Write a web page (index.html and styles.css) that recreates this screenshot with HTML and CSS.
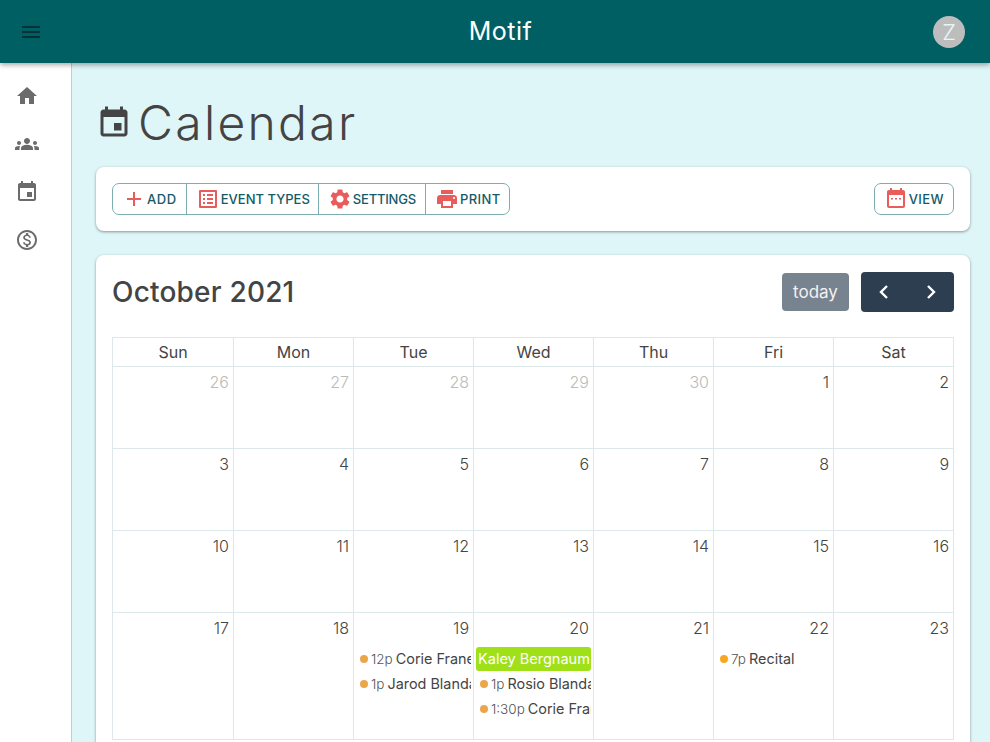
FILE: index.html
```html
<!DOCTYPE html>
<html>
<head>
  <meta charset="utf-8">
  <title>Motif - Calendar</title>
  <link rel="stylesheet" href="styles.css">
</head>
<body>
<div class="topbar">
  <button class="menu_btn">
    <svg viewBox="0 0 24 24" width="24" height="24"><path d="M3 18h18v-2H3v2zm0-5h18v-2H3v2zm0-7v2h18V6H3z"/></svg>
  </button>
  <div class="brand">Motif</div>
  <div class="avatar">Z</div>
</div>

<div class="layout">
  <div class="sidebar">
    <svg viewBox="0 0 24 24" width="24" height="24"><path d="M10 20v-6h4v6h5v-8h3L12 3 2 12h3v8z"/></svg>
    <svg viewBox="0 0 24 24" width="24" height="24"><path d="M12 12.75c1.63 0 3.07.39 4.24.9 1.08.48 1.76 1.56 1.76 2.73V18H6v-1.61c0-1.18.68-2.26 1.76-2.73 1.17-.52 2.61-.91 4.24-.91zM4 13c1.1 0 2-.9 2-2s-.9-2-2-2-2 .9-2 2 .9 2 2 2zm1.13 1.1c-.37-.06-.74-.1-1.13-.1-.99 0-1.93.21-2.78.58C.48 14.9 0 15.62 0 16.43V18h4.5v-1.61c0-.83.23-1.61.63-2.29zM20 13c1.1 0 2-.9 2-2s-.9-2-2-2-2 .9-2 2 .9 2 2 2zm4 3.43c0-.81-.48-1.53-1.22-1.85-.85-.37-1.79-.58-2.78-.58-.39 0-.76.04-1.13.1.4.68.63 1.46.63 2.29V18H24v-1.57zM12 6c1.66 0 3 1.34 3 3s-1.34 3-3 3-3-1.34-3-3 1.34-3 3-3z"/></svg>
    <svg viewBox="0 0 24 24" width="24" height="24"><path d="M17 12h-5v5h5v-5zM16 1v2H8V1H6v2H5c-1.11 0-1.99.9-1.99 2L3 19c0 1.1.89 2 2 2h14c1.1 0 2-.9 2-2V5c0-1.1-.9-2-2-2h-1V1h-2zm3 18H5V8h14v11z"/></svg>
    <svg viewBox="0 0 24 24" width="24" height="24"><path d="M12 2C6.48 2 2 6.48 2 12s4.48 10 10 10 10-4.48 10-10S17.52 2 12 2zm0 18c-4.41 0-8-3.59-8-8s3.59-8 8-8 8 3.59 8 8-3.59 8-8 8zm.31-8.86c-1.77-.45-2.34-.94-2.34-1.67 0-.84.79-1.43 2.1-1.43 1.38 0 1.9.66 1.94 1.64h1.71c-.05-1.34-.87-2.57-2.49-2.97V5H10.9v1.69c-1.51.32-2.72 1.3-2.72 2.81 0 1.79 1.49 2.69 3.66 3.21 1.95.46 2.34 1.15 2.34 1.87 0 .53-.39 1.39-2.1 1.39-1.6 0-2.23-.72-2.32-1.64H8.04c.1 1.7 1.36 2.66 2.86 2.97V19h2.34v-1.67c1.52-.29 2.72-1.16 2.73-2.77-.01-2.2-1.9-2.96-3.66-3.42z"/></svg>
  </div>

  <div class="main">
    <div class="page_title">
      <svg viewBox="0 0 24 24" width="36" height="36"><path d="M17 12h-5v5h5v-5zM16 1v2H8V1H6v2H5c-1.11 0-1.99.9-1.99 2L3 19c0 1.1.89 2 2 2h14c1.1 0 2-.9 2-2V5c0-1.1-.9-2-2-2h-1V1h-2zm3 18H5V8h14v11z"/></svg>
      <h1>Calendar</h1>
    </div>

    <div class="card toolbar">
      <div class="btn_group">
        <button class="tool_btn add_btn">
          <svg viewBox="0 0 24 24" width="24" height="24"><path d="M19 13h-6v6h-2v-6H5v-2h6V5h2v6h6v2z"/></svg>ADD
        </button>
        <button class="tool_btn types_btn">
          <svg viewBox="0 0 24 24" width="24" height="24"><path d="M19 5v14H5V5h14m1.1-2H3.9c-.5 0-.9.4-.9.9v16.2c0 .4.4.9.9.9h16.2c.4 0 .9-.5.9-.9V3.9c0-.5-.5-.9-.9-.9zM11 7h6v2h-6V7zm0 4h6v2h-6v-2zm0 4h6v2h-6zM7 7h2v2H7zm0 4h2v2H7zm0 4h2v2H7z"/></svg>EVENT TYPES
        </button>
        <button class="tool_btn settings_btn">
          <svg viewBox="0 0 24 24" width="24" height="24"><path d="M19.14 12.94c.04-.3.06-.61.06-.94 0-.32-.02-.64-.07-.94l2.03-1.58c.18-.14.23-.41.12-.61l-1.92-3.32c-.12-.22-.37-.29-.59-.22l-2.39.96c-.5-.38-1.03-.7-1.62-.94l-.36-2.54c-.04-.24-.24-.41-.48-.41h-3.84c-.24 0-.43.17-.47.41l-.36 2.54c-.59.24-1.13.57-1.62.94l-2.39-.96c-.22-.08-.47 0-.59.22L2.74 8.87c-.12.21-.08.47.12.61l2.03 1.58c-.05.3-.09.63-.09.94s.02.64.07.94l-2.03 1.58c-.18.14-.23.41-.12.61l1.92 3.32c.12.22.37.29.59.22l2.39-.96c.5.38 1.03.7 1.62.94l.36 2.54c.05.24.24.41.48.41h3.84c.24 0 .44-.17.47-.41l.36-2.54c.59-.24 1.13-.56 1.62-.94l2.39.96c.22.08.47 0 .59-.22l1.92-3.32c.12-.22.07-.47-.12-.61l-2.01-1.58zM12 15.6c-1.98 0-3.6-1.62-3.6-3.6s1.62-3.6 3.6-3.6 3.6 1.62 3.6 3.6-1.62 3.6-3.6 3.6z"/></svg>SETTINGS
        </button>
        <button class="tool_btn print_btn">
          <svg viewBox="0 0 24 24" width="24" height="24"><path d="M19 8H5c-1.66 0-3 1.34-3 3v6h4v4h12v-4h4v-6c0-1.66-1.34-3-3-3zm-3 11H8v-5h8v5zm3-7c-.55 0-1-.45-1-1s.45-1 1-1 1 .45 1 1-.45 1-1 1zm-1-9H6v4h12V3z"/></svg>PRINT
        </button>
      </div>
      <div class="btn_group">
        <button class="tool_btn view_btn">
          <svg viewBox="0 0 24 24" width="24" height="24"><path d="M19 3h-1V1h-2v2H8V1H6v2H5c-1.1 0-2 .9-2 2v14c0 1.1.9 2 2 2h14c1.1 0 2-.9 2-2V5c0-1.1-.9-2-2-2zm0 16H5V8h14v11z"/><path d="M7 11h2v1.5H7zM11 11h2v1.5h-2zM15 11h2v1.5h-2z"/></svg>VIEW
        </button>
      </div>
    </div>

    <div class="card calendar">
      <div class="cal_head">
        <h2>October 2021</h2>
        <div class="cal_btns">
          <button class="today_btn">today</button>
          <div class="nav_btns">
            <svg viewBox="0 0 16 16" width="16" height="16"><path d="M11 2 5 8l6 6" /></svg>
            <svg viewBox="0 0 16 16" width="16" height="16"><path d="M5 2l6 6-6 6" /></svg>
          </div>
        </div>
      </div>

      <table class="cal_grid">
        <thead>
          <tr><th>Sun</th><th>Mon</th><th>Tue</th><th>Wed</th><th>Thu</th><th>Fri</th><th>Sat</th></tr>
        </thead>
        <tbody>
          <tr>
            <td class="muted"><div class="day">26</div></td>
            <td class="muted"><div class="day">27</div></td>
            <td class="muted"><div class="day">28</div></td>
            <td class="muted"><div class="day">29</div></td>
            <td class="muted"><div class="day">30</div></td>
            <td><div class="day">1</div></td>
            <td><div class="day">2</div></td>
          </tr>
          <tr>
            <td><div class="day">3</div></td>
            <td><div class="day">4</div></td>
            <td><div class="day">5</div></td>
            <td><div class="day">6</div></td>
            <td><div class="day">7</div></td>
            <td><div class="day">8</div></td>
            <td><div class="day">9</div></td>
          </tr>
          <tr>
            <td><div class="day">10</div></td>
            <td><div class="day">11</div></td>
            <td><div class="day">12</div></td>
            <td><div class="day">13</div></td>
            <td><div class="day">14</div></td>
            <td><div class="day">15</div></td>
            <td><div class="day">16</div></td>
          </tr>
          <tr class="tall">
            <td><div class="day">17</div></td>
            <td><div class="day">18</div></td>
            <td>
              <div class="day">19</div>
              <div class="event"><i></i><span class="time">12p</span> <b>Corie Franecki</b></div>
              <div class="event"><i></i><span class="time">1p</span> <b>Jarod Blanda</b></div>
            </td>
            <td>
              <div class="day">20</div>
              <div class="event_bar">Kaley Bergnaum</div>
              <div class="event"><i></i><span class="time">1p</span> <b>Rosio Blanda</b></div>
              <div class="event"><i></i><span class="time">1:30p</span> <b>Corie Franecki</b></div>
            </td>
            <td><div class="day">21</div></td>
            <td>
              <div class="day">22</div>
              <div class="event"><i class="bright"></i><span class="time">7p</span> <b>Recital</b></div>
            </td>
            <td><div class="day">23</div></td>
          </tr>
        </tbody>
      </table>
    </div>
  </div>
</div>
</body>
</html>
```

FILE: styles.css
```css
html, body {
  height: 100%;
  margin: 0;
}
body {
  background-color: #dff6f9;
  font-family: "Inter", "Liberation Sans", sans-serif;
  color: #444;
  overflow: hidden;
}
button {
  font-family: inherit;
}

/* top bar */
.topbar {
  height: 63px;
  background: #005f63;
  box-shadow: 0 2px 5px rgba(0, 0, 0, 0.35);
  display: flex;
  align-items: center;
  padding: 0 25px 0 19px;
  position: relative;
  z-index: 2;
}
.menu_btn {
  background: none;
  border: 0;
  padding: 0;
  height: 24px;
  fill: #053238;
}
.brand {
  flex: 1;
  padding: 0 0 2px 25px;
  text-align: center;
  color: #fff;
  font-size: 25px;
  letter-spacing: 0.5px;
}
.avatar {
  width: 32px;
  height: 32px;
  border-radius: 50%;
  background: #bdbdbd;
  color: #e4f6f7;
  font-size: 22px;
  font-weight: 300;
  line-height: 32px;
  text-align: center;
}

.layout {
  display: flex;
  height: calc(100% - 63px);
}

/* sidebar */
.sidebar {
  width: 56px;
  flex: none;
  background: #fff;
  border-right: 1px solid #dfc0c4;
  display: flex;
  flex-direction: column;
  align-items: flex-start;
  gap: 24px;
  padding: 21px 0 0 15px;
  fill: #6b6b6b;
}

/* main */
.main {
  flex: 1;
  padding: 0 20px 0 24px;
  min-width: 0;
}
.page_title {
  display: flex;
  align-items: center;
  gap: 6px;
  height: 89px;
  padding-top: 15px;
  fill: #444;
}
.page_title h1 {
  margin: 0;
  font-size: 48px;
  font-weight: 300;
  letter-spacing: 2.3px;
}
.card {
  background: #fff;
  border-radius: 8px;
  box-shadow: 0 1px 3px rgba(0, 0, 0, 0.4);
}

/* toolbar */
.toolbar {
  display: flex;
  justify-content: space-between;
  padding: 16px;
  margin-bottom: 24px;
}
.btn_group {
  display: flex;
  border: 1px solid #7cafb1;
  border-radius: 7px;
  height: 32px;
  box-sizing: border-box;
}
.tool_btn {
  display: flex;
  align-items: center;
  gap: 1px;
  background: none;
  border: 0;
  border-left: 1px solid #7cafb1;
  padding: 0 9px;
  color: #145a68;
  font-size: 13px;
  font-weight: 450;
  fill: #e85c5c;
}
.tool_btn:first-child {
  border-left: 0;
}
.add_btn {
  letter-spacing: 0.6px;
}
.types_btn {
  padding: 0 8px 0 9px;
}
.settings_btn {
  padding: 0 9px;
  letter-spacing: -0.2px;
}
.print_btn {
  padding: 0 8px 0 9px;
  letter-spacing: 0.4px;
}
.view_btn {
  letter-spacing: 0.4px;
}

/* calendar */
.calendar {
  padding: 16px;
  height: 600px;
}
.cal_head {
  display: flex;
  justify-content: space-between;
  align-items: center;
  height: 41px;
  margin-bottom: 25px;
}
.cal_head h2 {
  margin: 0;
  font-size: 28px;
  font-weight: 450;
  letter-spacing: 0.2px;
}
.cal_btns {
  display: flex;
  align-items: center;
  gap: 12px;
}
.today_btn {
  width: 67px;
  height: 38px;
  background: #77838f;
  border: 0;
  border-radius: 4px;
  color: #f2f2f2;
  font-size: 17px;
}
.nav_btns {
  width: 93px;
  height: 40px;
  background: #2c3e50;
  border-radius: 4px;
  display: flex;
  align-items: center;
  justify-content: space-around;
}
.nav_btns svg {
  fill: none;
  stroke: #fff;
  stroke-width: 2.4;
}

.cal_grid {
  width: 842px;
  table-layout: fixed;
  border-collapse: collapse;
}
.cal_grid th, .cal_grid td {
  border: 1px solid #dde8ea;
  padding: 0;
  vertical-align: top;
}
.cal_grid th {
  height: 28px;
  font-size: 16px;
  font-weight: 400;
  vertical-align: middle;
}
.cal_grid th:first-child {
  width: 120px;
}
.cal_grid td {
  height: 81px;
  overflow: hidden;
}
.cal_grid .tall td {
  height: 126px;
}
.day {
  text-align: right;
  font-size: 16px;
  font-weight: 300;
  padding: 6px 4px 0 0;
  height: 27px;
  line-height: 19px;
}
.muted .day {
  color: #bbb;
}
.event, .event_bar {
  white-space: nowrap;
  overflow: hidden;
}
.event {
  display: flex;
  align-items: center;
  height: 25px;
  padding-left: 6px;
  margin-right: 2px;
  font-size: 13.5px;
}
.event i {
  width: 8px;
  height: 8px;
  border-radius: 50%;
  background: #eba64c;
  margin-right: 3px;
  flex: none;
}
.event i.bright {
  background: #f7a823;
}
.event .time {
  color: #555;
  font-weight: 300;
  margin-right: 3px;
}
.event b {
  font-size: 14.4px;
  font-weight: 400;
}
.event_bar {
  background: #9fe018;
  color: #fff;
  height: 24px;
  line-height: 24px;
  margin: 1px 2px 0;
  padding-left: 2px;
  border-radius: 3px;
  font-size: 14.5px;
}
```
